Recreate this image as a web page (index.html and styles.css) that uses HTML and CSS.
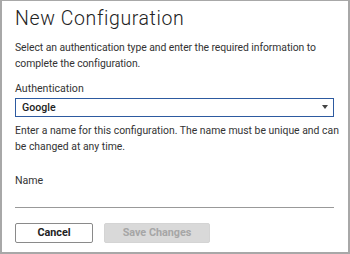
FILE: index.html
```html
<!DOCTYPE html>
<html lang="en">
<head>
    <meta charset="UTF-8">
    <title>New Configuration</title>
    <link rel="stylesheet" href="styles.css">
</head>
<body>
    <div class="dialog">
        <h1>New Configuration</h1>
        <p class="intro">Select an authentication type and enter the required information to<br>complete the configuration.</p>
        <label class="field-label">Authentication</label>
        <div class="select">
            <span>Google</span>
            <span class="caret"></span>
        </div>
        <p class="hint">Enter a name for this configuration. The name must be unique and can<br>be changed at any time.</p>
        <label class="field-label name-label">Name</label>
        <div class="text-input"></div>
        <div class="actions">
            <button class="btn">Cancel</button>
            <button class="btn btn-disabled">Save Changes</button>
        </div>
    </div>
</body>
</html>
```

FILE: styles.css
```css
body {
    margin: 0;
    font-family: Roboto, "Liberation Sans", sans-serif;
    color: #333;
    background: #fff;
}
.dialog {
    box-sizing: border-box;
    width: 350px;
    height: 254px;
    border: 1px solid #a8a8a8;
    border-width: 1px 2px 2px 2px;
    padding: 5.5px 14px 0 13px;
}
h1 {
    margin: 0;
    font-size: 19.5px;
    font-weight: 300;
    letter-spacing: 0.6px;
    line-height: 24px;
    color: #222;
}
.intro, .hint {
    margin: 0;
    font-size: 10.4px;
    line-height: 16px;
    white-space: nowrap;
}
.intro {
    margin-top: 9.5px;
    letter-spacing: -0.07px;
}
.field-label {
    display: block;
    font-size: 10.6px;
    line-height: 14px;
    margin-top: 9.5px;
}
.select {
    display: flex;
    justify-content: space-between;
    align-items: center;
    height: 19px;
    box-sizing: border-box;
    margin-top: 2px;
    padding: 0 5px 0 6px;
    border: 1.5px solid #2d5aa0;
    font-size: 10.6px;
    font-weight: 500;
    color: #222;
}
.caret {
    width: 0;
    height: 0;
    border-left: 3.5px solid transparent;
    border-right: 3.5px solid transparent;
    border-top: 4px solid #444;
}
.hint {
    margin-top: 6.5px;
}
.name-label {
    margin-top: 19px;
}
.text-input {
    height: 19px;
    border-bottom: 1px solid #999;
}
.actions {
    display: flex;
    gap: 11px;
    margin-top: 14.5px;
}
.btn {
    height: 20px;
    width: 78px;
    padding: 0;
    font-family: inherit;
    font-size: 10.8px;
    font-weight: 700;
    color: #222;
    background: #fff;
    border: 1px solid #8a8a8a;
    border-radius: 2px;
}
.btn-disabled {
    width: 106px;
    background: #d9d9d9;
    border-color: #d4d4d4;
    color: #a6a6a6;
}
```
